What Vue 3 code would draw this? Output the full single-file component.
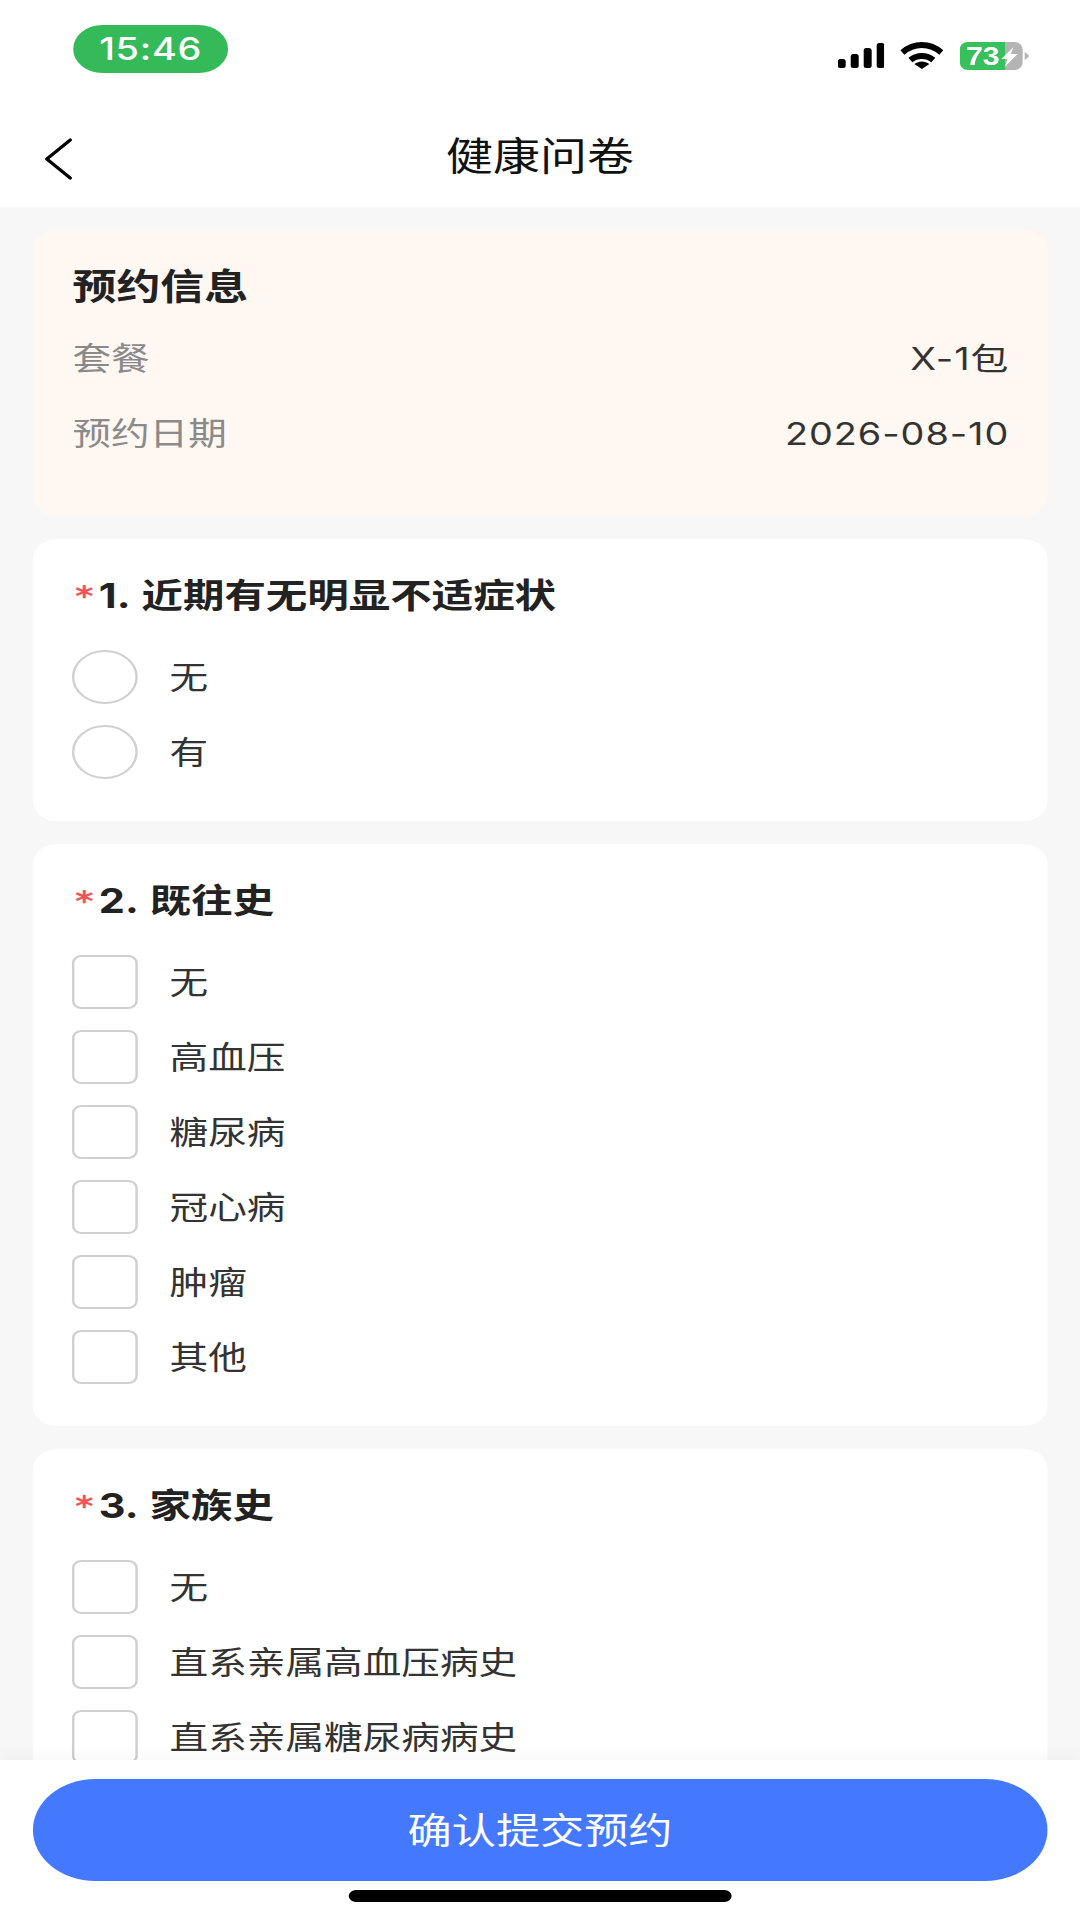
<script setup>
const info = [
  { label: '套餐', value: 'X-1包' },
  { label: '预约日期', value: '2026-08-10' }
]
const questions = [
  { no: 1, title: '近期有无明显不适症状', type: 'radio', options: ['无', '有'] },
  { no: 2, title: '既往史', type: 'check', options: ['无', '高血压', '糖尿病', '冠心病', '肿瘤', '其他'] },
  { no: 3, title: '家族史', type: 'check', options: ['无', '直系亲属高血压病史', '直系亲属糖尿病病史'] }
]
</script>

<template>
  <div class="viewport">
    <div class="stage">
      <header class="status">
        <div class="time">15:46</div>
        <div class="indicators">
          <svg class="signal" viewBox="0 0 47 25" preserveAspectRatio="none">
            <rect x="0" y="16" width="8" height="9" rx="2.5" />
            <rect x="13" y="11" width="8" height="14" rx="2.5" />
            <rect x="26" y="5" width="8" height="20" rx="2.5" />
            <rect x="39" y="0" width="8" height="25" rx="2.5" />
          </svg>
          <svg class="wifi" viewBox="0 0 44 27" preserveAspectRatio="none">
            <path d="M2.5 10.5 C14 0.5 30 0.5 41.5 10.5" fill="none" stroke="#000" stroke-width="6" />
            <path d="M10.5 18 C17 12.5 27 12.5 33.5 18" fill="none" stroke="#000" stroke-width="6" />
            <path d="M14.5 22 C19 18.5 25 18.5 29.5 22 L22 27 Z" fill="#000" />
          </svg>
          <div class="battery">
            <svg class="battery-art" viewBox="0 0 69 28" preserveAspectRatio="none">
              <path d="M8 0 H46 V28 H8 A8 8 0 0 1 0 20 V8 A8 8 0 0 1 8 0 Z" fill="#37c05c" />
              <path d="M46 0 H55 A8 8 0 0 1 63 8 V20 A8 8 0 0 1 55 28 H46 Z" fill="#b4b4b4" />
              <path d="M65 10 L69 13 V15 L65 18 Z" fill="#b4b4b4" />
              <path d="M54 5 L41.5 17 H48 L45 25 L58 12 H51 Z" fill="#fff" />
            </svg>
            <span class="battery-text">73</span>
          </div>
        </div>
      </header>

      <nav class="nav">
        <svg class="back" viewBox="0 0 30 42" preserveAspectRatio="none">
          <path d="M27 2 L3 21 L27 40" fill="none" stroke="#000" stroke-width="3.4" stroke-linecap="round" stroke-linejoin="round" />
        </svg>
        <h1 class="nav-title">健康问卷</h1>
      </nav>

      <main class="content">
        <section class="card info">
          <h2 class="info-title">预约信息</h2>
          <div v-for="row in info" :key="row.label" class="info-row">
            <span class="info-label">{{ row.label }}</span>
            <span class="info-value">{{ row.value }}</span>
          </div>
        </section>

        <section v-for="q in questions" :key="q.no" class="card question">
          <h3 class="q-title"><span class="star">*</span><span class="q-text">{{ q.no }}. {{ q.title }}</span></h3>
          <div class="options">
            <div v-for="opt in q.options" :key="opt" class="option">
              <span class="mark" :class="q.type"></span>
              <span class="opt-label">{{ opt }}</span>
            </div>
          </div>
        </section>
      </main>

      <footer class="footer">
        <button class="submit" type="button">确认提交预约</button>
        <div class="home-bar"></div>
      </footer>
    </div>
  </div>
</template>

<style>
html, body { margin: 0; background: #fff; }
</style>

<style scoped>
.viewport {
  width: 1080px;
  height: 1920px;
  overflow: hidden;
  background: #fff;
}
/* The reference is a phone capture stretched horizontally to fill the frame. */
.stage {
  width: 885.7px;
  height: 1920px;
  transform: scaleX(1.2194);
  transform-origin: 0 0;
  display: flex;
  flex-direction: column;
  font-family: "Inter", "Noto Sans CJK SC", sans-serif;
  color: #222;
}
.status {
  height: 103px;
  flex: none;
  background: #fff;
  display: flex;
  justify-content: space-between;
  align-items: flex-start;
  padding: 25px 0 0 60px;
  box-sizing: border-box;
}
.time {
  width: 127px;
  height: 48px;
  border-radius: 24px;
  background: #35ba5a;
  color: #fff;
  font-size: 31px;
  font-weight: 500;
  line-height: 48px;
  text-align: center;
  letter-spacing: 0.6px;
}
.indicators {
  display: flex;
  align-items: flex-start;
  padding: 17px 42px 0 0;
}
.signal { width: 38.5px; height: 25px; margin-top: 1px; fill: #000; }
.wifi { width: 36px; height: 27px; margin-left: 13px; }
.battery { position: relative; width: 56.6px; height: 28px; margin-left: 13px; }
.battery-art { display: block; width: 100%; height: 100%; }
.battery-text {
  position: absolute;
  left: 5px;
  top: 0;
  font-family: "Liberation Sans", sans-serif;
  font-size: 25px;
  font-weight: 700;
  line-height: 28px;
  color: #fff;
}
.nav {
  height: 104px;
  flex: none;
  background: #fff;
  display: flex;
  align-items: center;
  justify-content: center;
  position: relative;
}
.back {
  position: absolute;
  left: 36px;
  top: 35px;
  width: 24px;
  height: 42px;
}
.nav-title {
  margin: 0;
  padding-top: 2px;
  font-size: 38.5px;
  font-weight: 400;
  color: #111;
  line-height: 1;
}
.content {
  flex: 1;
  min-height: 0;
  overflow: hidden;
  background: #f7f7f7;
  padding: 23px 27px 0;
  display: flex;
  flex-direction: column;
  gap: 23px;
}
.card {
  flex: none;
  background: #fff;
  border-radius: 20px;
  box-sizing: border-box;
}
.info {
  height: 286px;
  background: #fef7f2;
  padding: 33px 32.5px 0;
}
.info-title {
  margin: 0 0 9.5px;
  font-size: 36px;
  font-weight: 700;
  line-height: 48px;
  color: #222;
}
.info-row {
  display: flex;
  justify-content: space-between;
  align-items: baseline;
  height: 75px;
  line-height: 75px;
  font-size: 31.6px;
}
.info-label { color: #8a8a8a; }
.info-value { color: #333; font-size: 31px; letter-spacing: 0.8px; margin-right: -1.5px; }
.question { padding: 33px 32px 42px; }
.q-title {
  margin: 0 0 30px;
  font-size: 34px;
  font-weight: 700;
  line-height: 48px;
  color: #222;
  display: flex;
  white-space: pre;
}
.q-text { word-spacing: 2px; }
.star {
  width: 22px;
  margin-left: -1px;
  margin-right: 1px;
  color: #f5515a;
  font-family: "DejaVu Sans", sans-serif;
  font-size: 29px;
  font-weight: 700;
  text-align: center;
}
.options { display: flex; flex-direction: column; gap: 21px; }
.option { display: flex; align-items: center; height: 54px; }
.mark {
  flex: none;
  width: 54px;
  height: 54px;
  box-sizing: border-box;
  border: 2.8px solid #d0d0d0;
  background: #fff;
}
.mark.radio { border-radius: 50%; }
.mark.check { border-radius: 8px; }
.opt-label {
  margin-left: 26px;
  padding-bottom: 4px;
  font-size: 31.7px;
  color: #333;
}
.footer {
  height: 160px;
  flex: none;
  background: #fff;
  box-shadow: 0 -6px 12px rgba(0, 0, 0, 0.03);
  padding: 19px 27px 0;
  box-sizing: border-box;
  position: relative;
  display: flex;
  flex-direction: column;
  align-items: center;
}
.submit {
  width: 100%;
  height: 102px;
  flex: none;
  border: 0;
  border-radius: 51px;
  background: #4479ff;
  color: #fff;
  font-family: inherit;
  font-size: 36.2px;
  padding: 0 0 5px;
}
.home-bar {
  width: 314px;
  height: 12px;
  margin-top: 9px;
  border-radius: 6px;
  background: #000;
}
</style>
